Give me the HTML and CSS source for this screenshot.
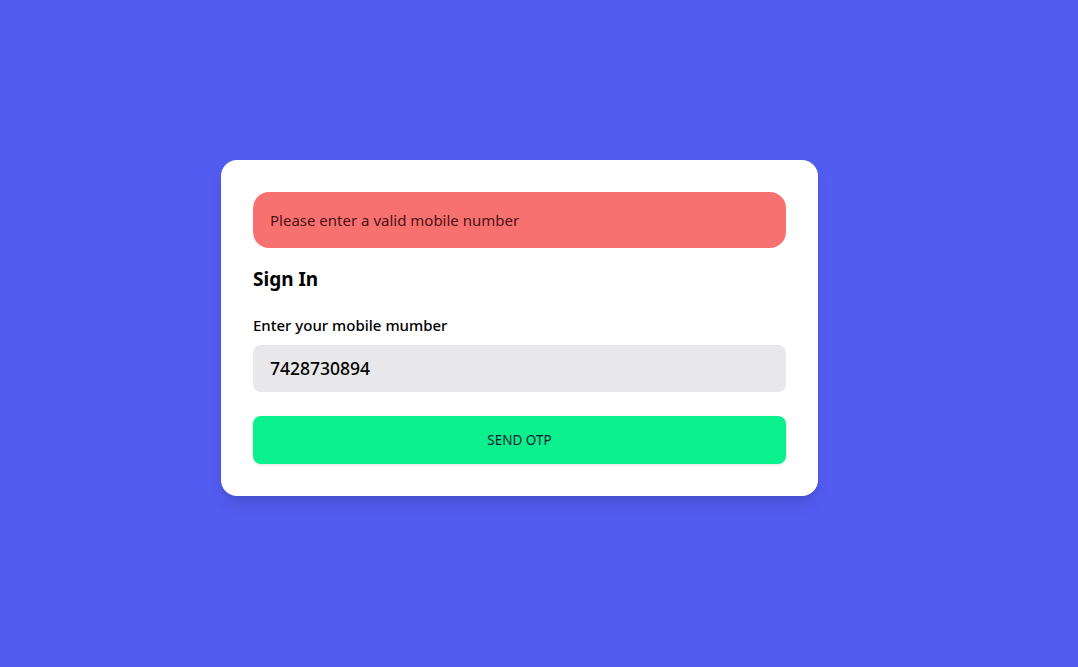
FILE: index.html
```html
<!DOCTYPE html>
<html lang="en">
<head>
<meta charset="utf-8">
<title>Sign In</title>
<link rel="stylesheet" href="styles.css">
</head>
<body>
<main class="page">
  <section class="card">
    <div class="alert">Please enter a valid mobile number</div>
    <h2 class="title">Sign In</h2>
    <label class="label" for="mobile">Enter your mobile mumber</label>
    <input class="input" id="mobile" type="text" value="7428730894">
    <button class="btn" type="button">SEND OTP</button>
  </section>
</main>
</body>
</html>
```
FILE: styles.css
```css
html, body {
  margin: 0;
  height: 100%;
}
body {
  background: #535cf0;
  font-family: "Noto Sans", "Open Sans", sans-serif;
  color: #000;
}
.page {
  padding: 160px 0 0 221px;
}
.card {
  box-sizing: border-box;
  width: 597px;
  height: 336px;
  background: #fff;
  border-radius: 16px;
  padding: 32px;
  display: flex;
  flex-direction: column;
  box-shadow: 0 10px 15px -3px rgba(0,0,0,0.12), 0 4px 6px -4px rgba(0,0,0,0.1);
}
.alert {
  height: 56px;
  box-sizing: border-box;
  background: #f87171;
  border-radius: 16px;
  padding: 0 17px;
  display: flex;
  align-items: center;
  font-size: 15px;
  color: #4a1212;
}
.title {
  margin: 17px 0 0;
  font-size: 19px;
  line-height: 28px;
  font-weight: 700;
}
.label {
  margin-top: 20px;
  font-size: 15px;
  line-height: 24px;
  font-weight: 500;
}
.input {
  margin-top: 8px;
  height: 48px;
  box-sizing: border-box;
  border: none;
  outline: none;
  background: #e8e8ea;
  border-radius: 8px;
  padding: 0 17px;
  font-family: inherit;
  font-size: 17.5px;
  font-weight: 500;
  color: #000;
}
.btn {
  margin-top: 24px;
  height: 48px;
  border: none;
  border-radius: 8px;
  background: #0af08c;
  font-family: inherit;
  font-size: 13.5px;
  color: #123;
  box-shadow: 0 1px 3px rgba(0,0,0,0.12);
}
```
